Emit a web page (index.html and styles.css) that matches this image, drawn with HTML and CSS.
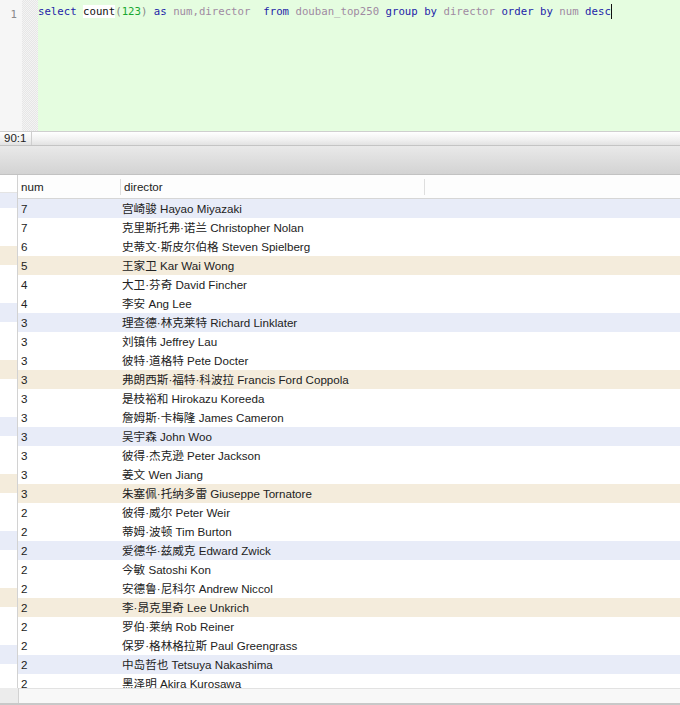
FILE: index.html
```html
<!DOCTYPE html>
<html>
<head>
<meta charset="utf-8">
<link rel="stylesheet" href="styles.css">
</head>
<body>
<div class="app">
  <div class="editor">
    <div class="gutter"><span class="ln">1</span></div>
    <div class="fold"></div>
    <div class="code"><span class="kw">select</span> <span class="fn">count</span><span class="pn">(</span><span class="nm">123</span><span class="pn">)</span> <span class="kw">as</span> <span class="id">num,director</span>  <span class="kw">from</span> <span class="id">douban_top250</span> <span class="kw">group</span> <span class="kw">by</span> <span class="id">director</span> <span class="kw">order</span> <span class="kw">by</span> <span class="id">num</span> <span class="kw">desc</span><span class="cursor"></span></div>
  </div>
  <div class="status"><span class="pos">90:1</span><span class="rest"></span></div>
  <div class="toolbar"></div>
  <div class="grid">
    <div class="rowhead">
      <div class="rh-head"></div>
      <div class="rh-body">
        <div class="rh-row blue"></div><div class="rh-row"></div><div class="rh-row"></div>
        <div class="rh-row beige"></div><div class="rh-row"></div><div class="rh-row"></div>
        <div class="rh-row blue"></div><div class="rh-row"></div><div class="rh-row"></div>
        <div class="rh-row beige"></div><div class="rh-row"></div><div class="rh-row"></div>
        <div class="rh-row blue"></div><div class="rh-row"></div><div class="rh-row"></div>
        <div class="rh-row beige"></div><div class="rh-row"></div><div class="rh-row"></div>
        <div class="rh-row blue"></div><div class="rh-row"></div><div class="rh-row"></div>
        <div class="rh-row beige"></div><div class="rh-row"></div><div class="rh-row"></div>
        <div class="rh-row blue"></div><div class="rh-row"></div><div class="rh-row"></div>
      </div>
    </div>
    <div class="table">
      <div class="thead">
        <div class="c1 th">num</div>
        <div class="c2 th">director</div>
        <div class="c3 th"></div>
      </div>
      <div class="tbody">
        <div class="tr blue"><div class="c1">7</div><div class="c2">宫崎骏 Hayao Miyazaki</div></div>
        <div class="tr"><div class="c1">7</div><div class="c2">克里斯托弗·诺兰 Christopher Nolan</div></div>
        <div class="tr"><div class="c1">6</div><div class="c2">史蒂文·斯皮尔伯格 Steven Spielberg</div></div>
        <div class="tr beige"><div class="c1">5</div><div class="c2">王家卫 Kar Wai Wong</div></div>
        <div class="tr"><div class="c1">4</div><div class="c2">大卫·芬奇 David Fincher</div></div>
        <div class="tr"><div class="c1">4</div><div class="c2">李安 Ang Lee</div></div>
        <div class="tr blue"><div class="c1">3</div><div class="c2">理查德·林克莱特 Richard Linklater</div></div>
        <div class="tr"><div class="c1">3</div><div class="c2">刘镇伟 Jeffrey Lau</div></div>
        <div class="tr"><div class="c1">3</div><div class="c2">彼特·道格特 Pete Docter</div></div>
        <div class="tr beige"><div class="c1">3</div><div class="c2">弗朗西斯·福特·科波拉 Francis Ford Coppola</div></div>
        <div class="tr"><div class="c1">3</div><div class="c2">是枝裕和 Hirokazu Koreeda</div></div>
        <div class="tr"><div class="c1">3</div><div class="c2">詹姆斯·卡梅隆 James Cameron</div></div>
        <div class="tr blue"><div class="c1">3</div><div class="c2">吴宇森 John Woo</div></div>
        <div class="tr"><div class="c1">3</div><div class="c2">彼得·杰克逊 Peter Jackson</div></div>
        <div class="tr"><div class="c1">3</div><div class="c2">姜文 Wen Jiang</div></div>
        <div class="tr beige"><div class="c1">3</div><div class="c2">朱塞佩·托纳多雷 Giuseppe Tornatore</div></div>
        <div class="tr"><div class="c1">2</div><div class="c2">彼得·威尔 Peter Weir</div></div>
        <div class="tr"><div class="c1">2</div><div class="c2">蒂姆·波顿 Tim Burton</div></div>
        <div class="tr blue"><div class="c1">2</div><div class="c2">爱德华·兹威克 Edward Zwick</div></div>
        <div class="tr"><div class="c1">2</div><div class="c2">今敏 Satoshi Kon</div></div>
        <div class="tr"><div class="c1">2</div><div class="c2">安德鲁·尼科尔 Andrew Niccol</div></div>
        <div class="tr beige"><div class="c1">2</div><div class="c2">李·昂克里奇 Lee Unkrich</div></div>
        <div class="tr"><div class="c1">2</div><div class="c2">罗伯·莱纳 Rob Reiner</div></div>
        <div class="tr"><div class="c1">2</div><div class="c2">保罗·格林格拉斯 Paul Greengrass</div></div>
        <div class="tr blue"><div class="c1">2</div><div class="c2">中岛哲也 Tetsuya Nakashima</div></div>
        <div class="tr"><div class="c1">2</div><div class="c2">黑泽明 Akira Kurosawa</div></div>
      </div>
    </div>
  </div>
  <div class="hscroll"><div class="hs-left"></div><div class="hs-main"></div></div>
</div>
</body>
</html>
```

FILE: styles.css
```css
html, body {
  margin: 0;
  padding: 0;
  background: #fff;
}
.app {
  width: 680px;
  height: 705px;
  display: flex;
  flex-direction: column;
  overflow: hidden;
  font-family: "Liberation Sans", "Noto Sans CJK SC", sans-serif;
}
.editor {
  height: 131px;
  display: flex;
  flex: none;
}
.gutter {
  width: 22px;
  background: #f6f6f6;
  box-sizing: border-box;
  padding-top: 4px;
  text-align: right;
  padding-right: 5px;
}
.ln {
  font-family: "DejaVu Sans Mono", monospace;
  font-size: 10.7px;
  line-height: 15px;
  color: #8a8a8a;
}
.fold {
  width: 16px;
  background-color: #f4f4f4;
  background-image:
    linear-gradient(45deg, #e6e6e6 25%, transparent 25%, transparent 75%, #e6e6e6 75%),
    linear-gradient(45deg, #e6e6e6 25%, transparent 25%, transparent 75%, #e6e6e6 75%);
  background-size: 2px 2px;
  background-position: 0 0, 1px 1px;
}
.code {
  flex: 1;
  background: #e5fde0;
  font-family: "DejaVu Sans Mono", monospace;
  font-size: 10.7px;
  line-height: 15px;
  padding-top: 4px;
  white-space: pre;
  color: #111;
}
.kw { color: #1e1ea8; }
.fn { color: #111; background: #fff; }
.pn { color: #8a8a8a; }
.nm { color: #18a832; }
.id { color: #a08aa2; }
.cursor {
  display: inline-block;
  width: 1px;
  height: 15px;
  background: #111;
  vertical-align: top;
}
.status {
  height: 15px;
  flex: none;
  box-sizing: border-box;
  border-top: 1px solid #cfcfcf;
  border-bottom: 1px solid #c4c4c4;
  background: linear-gradient(#ffffff, #f0f0f0 60%, #e2e2e2);
  display: flex;
  font-size: 11.5px;
  line-height: 13px;
  color: #222;
}
.pos {
  width: 32px;
  box-sizing: border-box;
  padding-left: 4px;
  border-right: 1px solid #cfcfcf;
}
.toolbar {
  height: 29px;
  flex: none;
  box-sizing: border-box;
  background: linear-gradient(#e9e9e9, #d3d3d3);
  border-bottom: 1px solid #c2c2c2;
}
.grid {
  height: 513px;
  flex: none;
  display: flex;
  overflow: hidden;
}
.rowhead {
  width: 18px;
  flex: none;
  box-sizing: border-box;
  border-right: 1px solid #d2d2d2;
  display: flex;
  flex-direction: column;
  overflow: hidden;
}
.rh-head {
  height: 17px;
  flex: none;
  background: #fff;
  border-bottom: 1px solid #e4e4e4;
}
.rh-body {
  flex: 1;
  overflow: hidden;
}
.rh-row {
  height: 19px;
  background: #fff;
}
.rh-row:first-child {
  height: 15px;
}
.table {
  flex: 1;
  display: flex;
  flex-direction: column;
  overflow: hidden;
}
.thead {
  height: 24px;
  flex: none;
  box-sizing: border-box;
  display: flex;
  align-items: center;
  background: #fdfdfd;
  border-bottom: 1px solid #d6d6d6;
}
.th {
  height: 16px;
  line-height: 16px;
  font-size: 11.6px;
  color: #222;
}
.c1 {
  width: 102px;
  flex: none;
  box-sizing: border-box;
  padding-left: 3px;
}
.c2 {
  width: 305px;
  flex: none;
  box-sizing: border-box;
  padding-left: 2px;
}
.thead .c1, .thead .c2 {
  border-right: 1px solid #dedede;
}
.thead .c2 { padding-left: 3px; width: 304px; }
.thead .c1 { width: 103px; }
.tbody {
  flex: 1;
  overflow: hidden;
}
.tr {
  height: 19px;
  display: flex;
  align-items: center;
  font-size: 11.6px;
  line-height: 19px;
  color: #222;
  white-space: nowrap;
}
.blue { background: #e8ecf8; }
.beige { background: #f4ecdc; }
.hscroll {
  height: 17px;
  flex: none;
  display: flex;
  box-sizing: border-box;
  border-bottom: 2px solid #c8c8c8;
}
.hs-left {
  width: 18px;
  background: #ececec;
  border-right: 1px solid #d2d2d2;
}
.hs-main {
  flex: 1;
  background: #f8f8f8;
  border-top: 1px solid #e2e2e2;
}
```
